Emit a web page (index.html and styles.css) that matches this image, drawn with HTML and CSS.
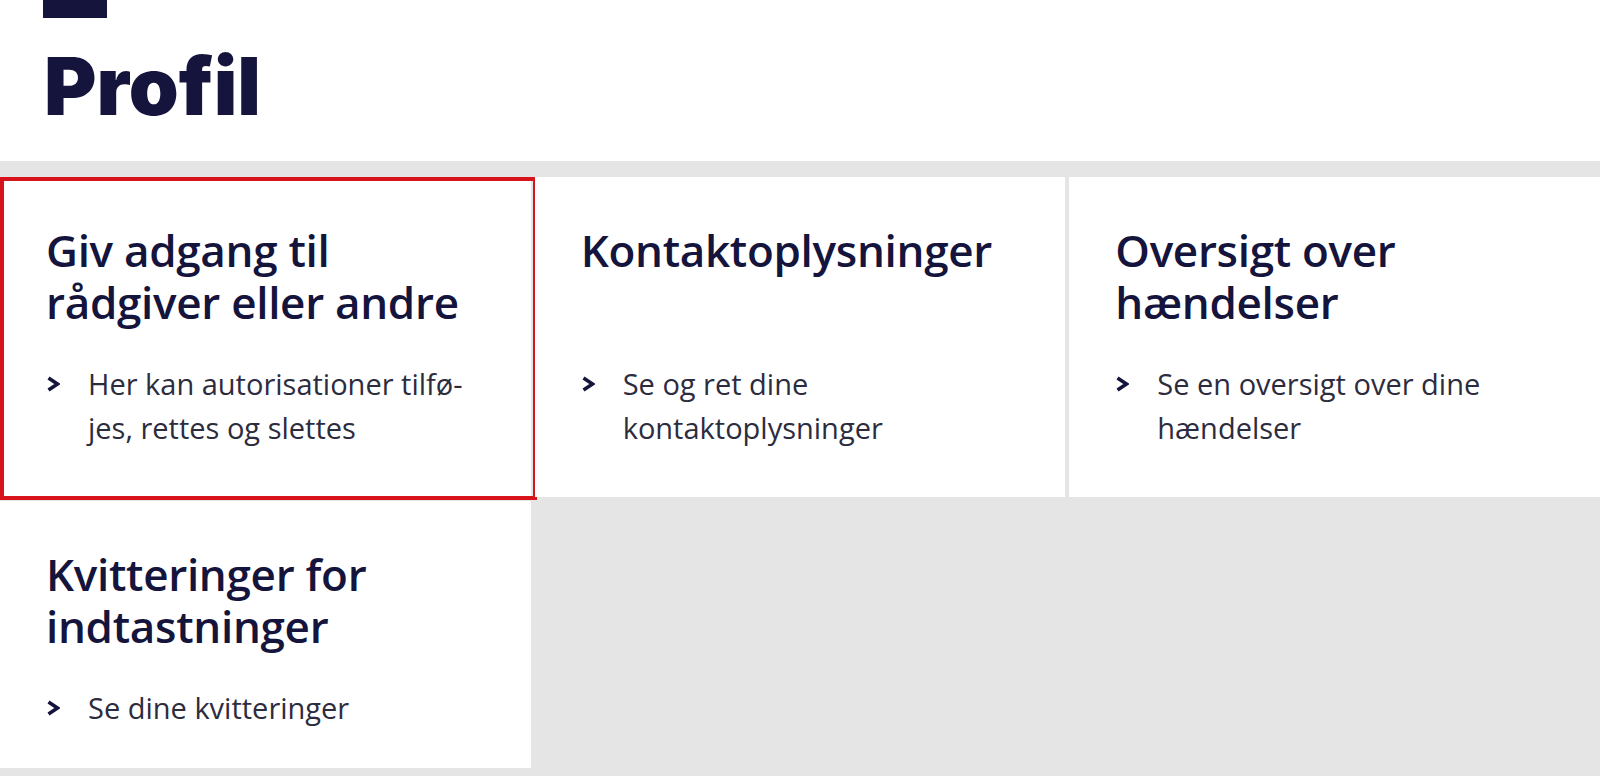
FILE: index.html
```html
<!DOCTYPE html>
<html lang="da">
<head>
  <meta charset="UTF-8">
  <meta name="viewport" content="width=device-width, initial-scale=1.0">
  <title>Profil</title>
  <link rel="stylesheet" href="styles.css">
</head>
<body>
  <header class="page-header">
    <div class="accent-bar"></div>
    <h1>Profil</h1>
  </header>

  <main class="tiles">
    <a class="tile tile-marked" href="#">
      <h2>Giv adgang til rådgiver eller andre</h2>
      <div class="tile-link">
        <svg class="chevron" viewBox="0 0 14 16"><polyline points="2.5,2 11.5,8 2.5,14"/></svg>
        <span>Her kan autorisationer tilfø-<br>jes, rettes og slettes</span>
      </div>
    </a>

    <a class="tile" href="#">
      <h2>Kontaktoplysninger</h2>
      <div class="tile-link">
        <svg class="chevron" viewBox="0 0 14 16"><polyline points="2.5,2 11.5,8 2.5,14"/></svg>
        <span>Se og ret dine<br>kontaktoplysninger</span>
      </div>
    </a>

    <a class="tile" href="#">
      <h2>Oversigt over hændelser</h2>
      <div class="tile-link">
        <svg class="chevron" viewBox="0 0 14 16"><polyline points="2.5,2 11.5,8 2.5,14"/></svg>
        <span>Se en oversigt over dine<br>hændelser</span>
      </div>
    </a>

    <a class="tile tile-short" href="#">
      <h2>Kvitteringer for indtastninger</h2>
      <div class="tile-link">
        <svg class="chevron" viewBox="0 0 14 16"><polyline points="2.5,2 11.5,8 2.5,14"/></svg>
        <span>Se dine kvitteringer</span>
      </div>
    </a>
  </main>
</body>
</html>
```

FILE: styles.css
```css
:root {
  --navy: #14143c;
  --text: #2c2c3e;
  --gray: #e5e5e5;
  --marker: #d7141c;
}

body {
  margin: 0;
  background-color: #ffffff;
  color: var(--navy);
  font-family: "Open Sans", "Liberation Sans", sans-serif;
}

.page-header {
  height: 161px;
  padding-left: 43px;
  box-sizing: border-box;
}

.accent-bar {
  width: 64px;
  height: 18px;
  background-color: var(--navy);
}

.page-header h1 {
  margin: 18px 0 0 1px;
  font-family: Inter, "Open Sans", sans-serif;
  font-weight: 900;
  font-size: 80px;
  line-height: 100px;
  letter-spacing: 0;
  color: var(--navy);
}

.tiles {
  display: grid;
  grid-template-columns: repeat(3, 1fr);
  gap: 4px;
  padding-top: 16px;
  min-height: 615px;
  align-content: start;
  background-color: var(--gray);
}

.tile {
  position: relative;
  display: block;
  padding: 47px 46px 47px;
  background-color: #ffffff;
  text-decoration: none;
  color: inherit;
}

.tile-short {
  padding-bottom: 38px;
}

.tile h2 {
  margin: 0;
  min-height: 104px;
  font-size: 44px;
  font-weight: 600;
  line-height: 52px;
  letter-spacing: -0.3px;
  color: var(--navy);
}

.tile-link {
  display: flex;
  gap: 28px;
  margin-top: 34px;
  font-size: 29px;
  line-height: 44px;
  color: var(--text);
}

.chevron {
  flex: none;
  width: 14px;
  height: 16px;
  margin-top: 14px;
  fill: none;
  stroke: var(--navy);
  stroke-width: 3.6;
}

/* red annotation around the first tile */
.tile-marked::after {
  content: "";
  position: absolute;
  top: 0;
  left: 0;
  right: -6px;
  bottom: -3px;
  border: 4px solid var(--marker);
  pointer-events: none;
}
```
